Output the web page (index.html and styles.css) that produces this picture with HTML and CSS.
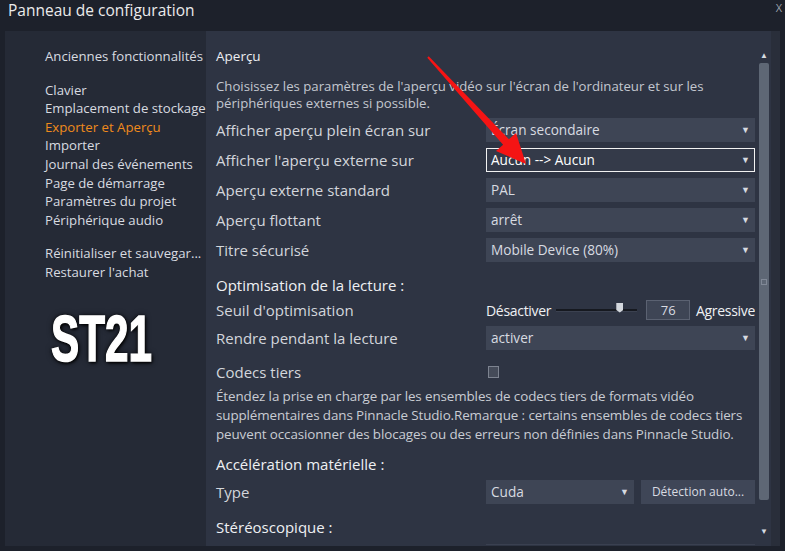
FILE: index.html
```html
<!DOCTYPE html>
<html lang="fr">
<head>
    <meta charset="UTF-8">
    <title>Panneau de configuration</title>
    <link rel="stylesheet" href="styles.css">
</head>
<body>
    <div class="window">
        <div class="titlebar">
            <div class="title">Panneau de configuration</div>
            <div class="close">X</div>
        </div>
        <div class="panel">
            <div class="nav">
                <div class="nav-group">
                    <div class="nav-item">Anciennes fonctionnalités</div>
                </div>
                <div class="nav-group">
                    <div class="nav-item">Clavier</div>
                    <div class="nav-item">Emplacement de stockage</div>
                    <div class="nav-item active">Exporter et Aperçu</div>
                    <div class="nav-item">Importer</div>
                    <div class="nav-item">Journal des événements</div>
                    <div class="nav-item">Page de démarrage</div>
                    <div class="nav-item">Paramètres du projet</div>
                    <div class="nav-item">Périphérique audio</div>
                </div>
                <div class="nav-group">
                    <div class="nav-item">Réinitialiser et sauvegar...</div>
                    <div class="nav-item">Restaurer l'achat</div>
                </div>
                <div class="badge">ST21</div>
            </div>
            <div class="content">
                <div class="settings">
                    <div class="heading">Aperçu</div>
                    <div class="desc">Choisissez les paramètres de l'aperçu vidéo sur l'écran de l'ordinateur et sur les périphériques externes si possible.</div>

                    <div class="row">
                        <div class="label">Afficher aperçu plein écran sur</div>
                        <div class="select">Écran secondaire</div>
                    </div>
                    <div class="row">
                        <div class="label">Afficher l'aperçu externe sur</div>
                        <div class="select focused">Aucun --&gt; Aucun</div>
                    </div>
                    <div class="row">
                        <div class="label">Aperçu externe standard</div>
                        <div class="select">PAL</div>
                    </div>
                    <div class="row">
                        <div class="label">Aperçu flottant</div>
                        <div class="select">arrêt</div>
                    </div>
                    <div class="row">
                        <div class="label">Titre sécurisé</div>
                        <div class="select">Mobile Device (80%)</div>
                    </div>

                    <div class="section">Optimisation de la lecture :</div>
                    <div class="row slim">
                        <div class="label">Seuil d'optimisation</div>
                        <div class="slider-box">
                            <span class="slider-text">Désactiver</span>
                            <div class="track"><div class="thumb"></div></div>
                            <div class="num">76</div>
                            <span class="slider-text">Agressive</span>
                        </div>
                    </div>
                    <div class="row">
                        <div class="label">Rendre pendant la lecture</div>
                        <div class="select">activer</div>
                    </div>

                    <div class="row check-row">
                        <div class="label">Codecs tiers</div>
                        <div class="control"><div class="checkbox"></div></div>
                    </div>
                    <div class="para">Étendez la prise en charge par les ensembles de codecs tiers de formats vidéo<br>supplémentaires dans Pinnacle Studio.Remarque : certains ensembles de codecs tiers<br>peuvent occasionner des blocages ou des erreurs non définies dans Pinnacle Studio.</div>

                    <div class="section gap">Accélération matérielle :</div>
                    <div class="row">
                        <div class="label">Type</div>
                        <div class="control split">
                            <div class="select short">Cuda</div>
                            <div class="btn">Détection auto...</div>
                        </div>
                    </div>

                    <div class="section gap">Stéréoscopique :</div>
                    <div class="peek"></div>
                </div>
                <div class="scrollbar">
                    <div class="sb-arrow">▲</div>
                    <div class="sb-thumb"><div class="grip"></div></div>
                    <div class="sb-arrow">▼</div>
                </div>
            </div>
            <div class="edge"></div>
        </div>
        <svg class="arrow" width="785" height="551" viewBox="0 0 785 551">
            <polygon points="428.7,56.3 508.9,139.3 516,133 526,164 496,151 503.1,144.7 427.3,57.7" fill="#f51414"/>
        </svg>
    </div>
</body>
</html>
```

FILE: styles.css
```css
body {
    margin: 0;
    padding: 0;
    background-color: #1d212b;
    font-family: 'Open Sans', 'Noto Sans', sans-serif;
    overflow: hidden;
}
.window {
    width: 785px;
    height: 551px;
    position: relative;
    background-color: #1d212b;
}
.titlebar {
    height: 31px;
    display: flex;
    justify-content: space-between;
    align-items: flex-start;
}
.title {
    margin-left: 8px;
    font-size: 15.5px;
    line-height: 21px;
    color: #ebebeb;
}
.close {
    margin-right: 3px;
    font-size: 11px;
    line-height: 15px;
    color: #9aa0aa;
}
.panel {
    margin-left: 5px;
    width: 775px;
    height: 515px;
    display: flex;
    background-color: #2a2f3c;
}
.nav {
    width: 161px;
    padding: 16px 0 0 40px;
    background-color: #252a36;
    position: relative;
}
.nav-group {
    margin-bottom: 15px;
}
.nav-item {
    font-size: 13.2px;
    line-height: 18.6px;
    color: #d8dbe0;
    white-space: nowrap;
}
.nav-item.active {
    color: #f08a1c;
}
.badge {
    position: absolute;
    left: 46px;
    top: 271px;
    font-family: 'Liberation Sans', sans-serif;
    font-weight: bold;
    font-size: 64px;
    line-height: 74px;
    color: #ffffff;
    -webkit-text-stroke: 1.5px #ffffff;
    transform: scaleX(0.66);
    transform-origin: left center;
    text-shadow: 0 0 3px #000, 2px 2px 4px #000, 0 0 8px rgba(0, 0, 0, 0.8);
}
.content {
    width: 565px;
    display: flex;
    background-color: #2e3443;
}
.settings {
    width: 539px;
    padding: 16px 0 0 10px;
    overflow: hidden;
}
.heading {
    font-size: 13.5px;
    line-height: 18px;
    color: #eceef2;
}
.desc {
    margin-top: 13px;
    font-size: 13.2px;
    line-height: 17px;
    color: #c3c7cf;
}
.row {
    margin-top: 3px;
    height: 30px;
    display: flex;
    align-items: center;
}
.row + .row {
    margin-top: 0;
}
.section + .row {
    margin-top: 2px;
}
.section.gap + .row {
    margin-top: 3px;
}
.row.slim {
    height: 26px;
}
.row.check-row {
    margin-top: 8px;
    height: 22px;
}
.label {
    width: 270px;
    font-size: 15px;
    color: #d3d6dc;
    white-space: nowrap;
}
.select {
    width: 269px;
    height: 24px;
    box-sizing: border-box;
    padding: 0 24px 0 5px;
    background-color: #3e4555;
    font-size: 13.6px;
    line-height: 24px;
    color: #d8dbe1;
    position: relative;
}
.select::after {
    content: "▼";
    position: absolute;
    right: 5px;
    top: 0;
    font-size: 9px;
    color: #d6dae0;
}
.select.focused {
    border: 1px solid #f2f2f2;
    background-color: #343a49;
    line-height: 22px;
    padding-left: 4px;
    color: #ffffff;
}
.select.focused::after {
    right: 4px;
}
.select.short {
    width: 148px;
}
.control {
    width: 269px;
    display: flex;
    align-items: center;
}
.control.split {
    gap: 7px;
}
.btn {
    width: 114px;
    height: 24px;
    background-color: #3f4657;
    font-size: 12px;
    line-height: 24px;
    text-align: center;
    color: #d8dbe1;
}
.checkbox {
    margin-left: 2px;
    width: 9px;
    height: 10px;
    border: 1px solid #7d8390;
    background-color: #454b59;
}
.section {
    margin-top: 10px;
    font-size: 15px;
    line-height: 20px;
    color: #eef0f3;
}
.section.gap {
    margin-top: 10px;
}
.row + .section.gap {
    margin-top: 10px;
}
.slider-box {
    width: 269px;
    display: flex;
    align-items: center;
}
.slider-text {
    font-size: 14px;
    color: #eef0f3;
    letter-spacing: -0.3px;
}
.track {
    margin-left: 5px;
    width: 82px;
    height: 2px;
    background-color: #161920;
    border-bottom: 1px solid #3b4150;
    position: relative;
}
.thumb {
    position: absolute;
    left: 60px;
    top: -6px;
    width: 7px;
    height: 10px;
    background-color: #d3d7dd;
    clip-path: polygon(0 0, 100% 0, 100% 75%, 50% 100%, 0 75%);
}
.num {
    margin-left: 9px;
    width: 44px;
    height: 20px;
    box-sizing: border-box;
    border: 1px solid #5b6272;
    background-color: #3e4555;
    font-size: 13px;
    line-height: 18px;
    text-align: center;
    color: #d8dbe1;
    margin-right: 6px;
}
.para {
    margin-top: 4px;
    font-size: 13.4px;
    line-height: 19px;
    color: #c9ccd3;
    letter-spacing: -0.1px;
    white-space: nowrap;
}
.peek {
    margin: 7px 0 0 270px;
    width: 269px;
    height: 1px;
    background-color: #3a4050;
}
.scrollbar {
    margin-left: 2px;
    width: 14px;
    display: flex;
    flex-direction: column;
    align-items: center;
}
.sb-arrow {
    font-size: 8px;
    line-height: 12px;
    color: #d6dae0;
}
.sb-arrow:first-child {
    margin-top: 18px;
}
.sb-thumb {
    margin-top: 2px;
    width: 10px;
    height: 437px;
    border-radius: 2px;
    background-color: #5e6775;
    display: flex;
    justify-content: center;
    align-items: center;
}
.grip {
    width: 4px;
    height: 4px;
    border: 1px solid #808896;
}
.sb-thumb + .sb-arrow {
    margin-top: 25px;
}
.edge {
    flex: 1;
    background-color: #292e3a;
}
.arrow {
    position: absolute;
    left: 0;
    top: 0;
    pointer-events: none;
}
```
